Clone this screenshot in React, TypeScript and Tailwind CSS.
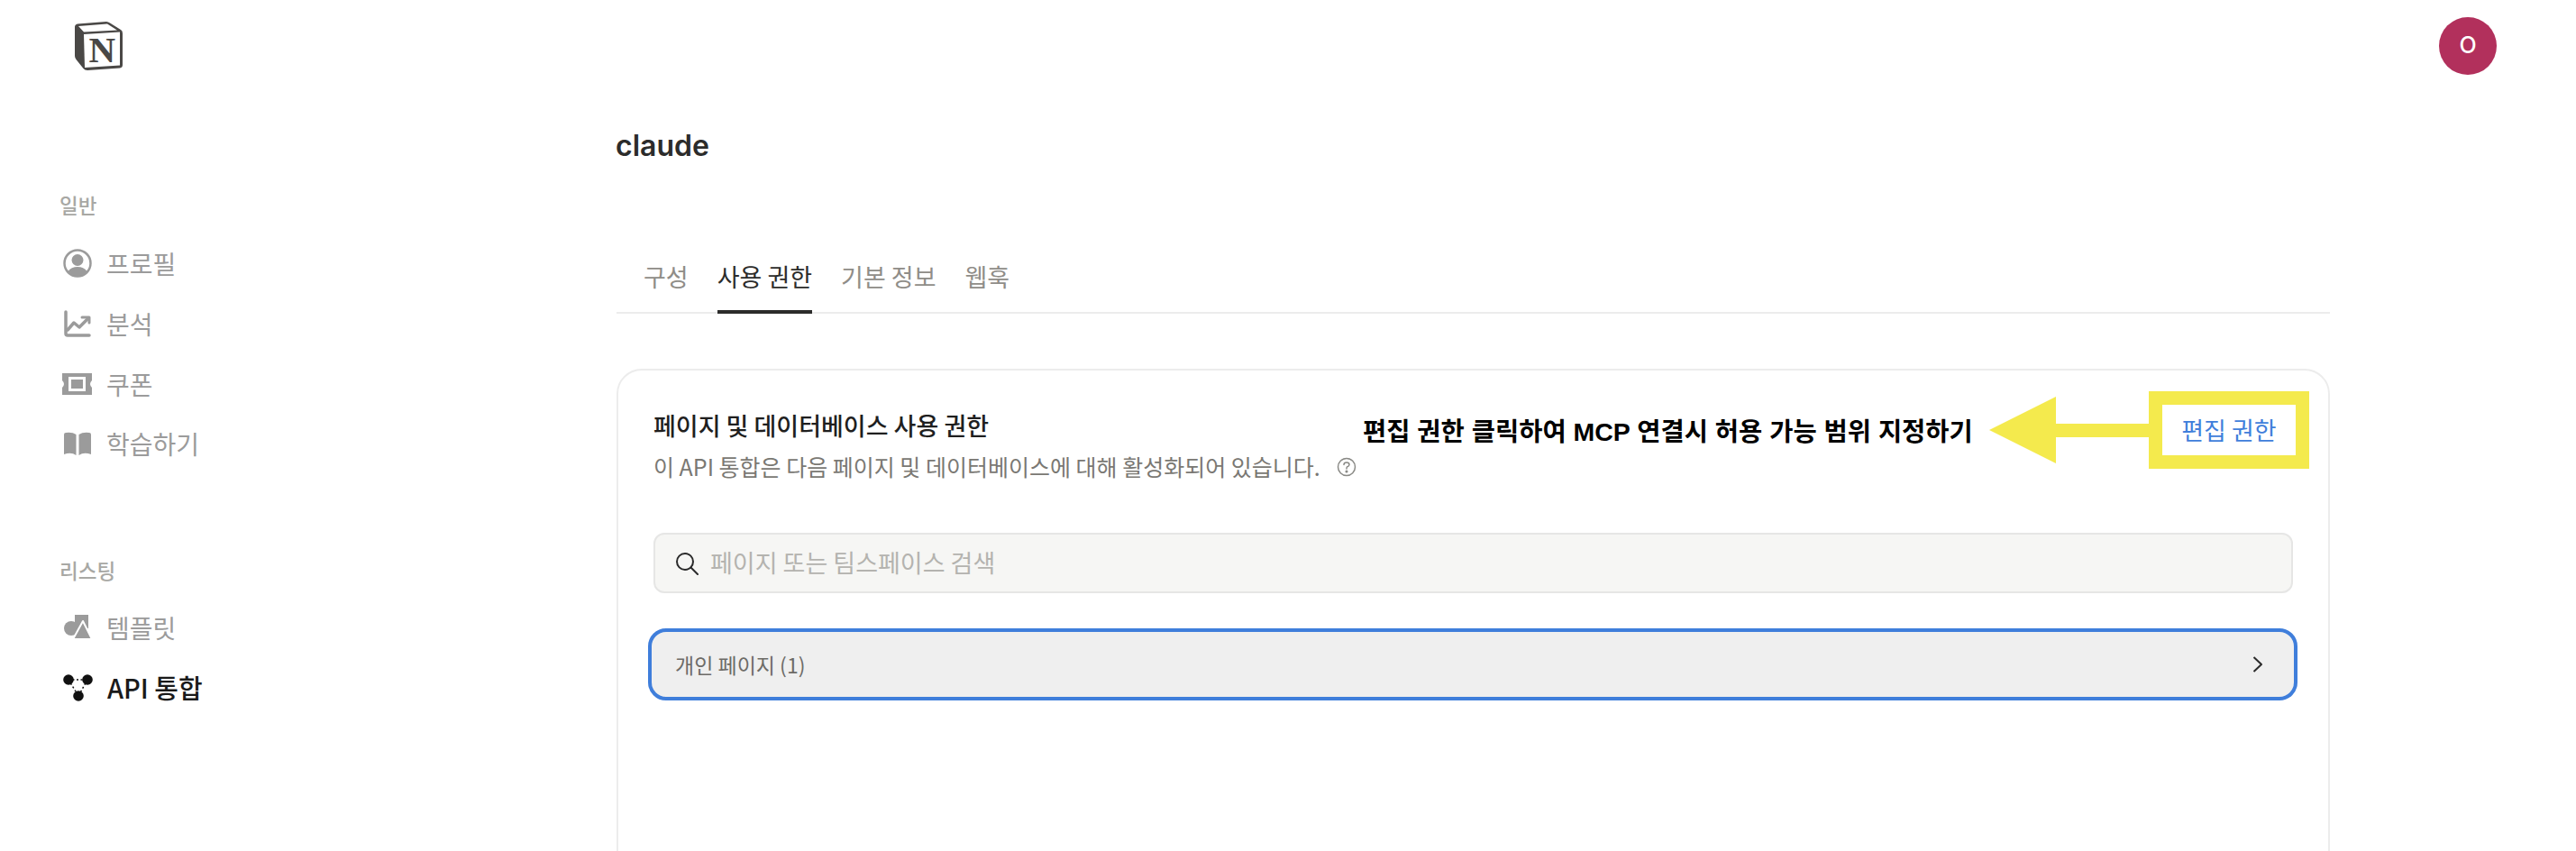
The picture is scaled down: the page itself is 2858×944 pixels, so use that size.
const kr = '"Noto Sans CJK KR", Inter, sans-serif'

const NotionLogo = () => (
  <svg width="54" height="56" viewBox="0 0 54 56">
    <path d="M1 7 Q1 4 4 3.500 L36 1 Q38 1 40 2.500 L52 10 Q54 11 54 14 L54 49 Q54 52 51 52.500 L15 55 Q12 55 10.500 53 L2.500 43 Q1 41 1 39 Z" fill="#4a4846" />
    <path d="M5 6 L37 3.500 L48 10.500 L11 12.500 Z" fill="#fff" />
    <path d="M11 15 L51 12.500 L51 49.500 L12 52 Z" fill="#fff" />
    <text x="16.500" y="46" fontFamily="Liberation Serif, serif" fontWeight="700" fontSize="41" fill="#4a4846">N</text>
  </svg>
)

const ProfileIcon = () => (
  <svg width="32" height="32" viewBox="0 0 32 32" fill="none">
    <circle cx="16" cy="16" r="14.500" stroke="#9b9b9b" strokeWidth="2.500" />
    <circle cx="16" cy="12.500" r="6.500" fill="#9b9b9b" />
    <path d="M5.500 25 Q9 20 16 20 Q23 20 26.500 25 Q22 30 16 30 Q10 30 5.500 25 Z" fill="#9b9b9b" />
  </svg>
)

const ChartIcon = () => (
  <svg width="30" height="30" viewBox="0 0 30 30" fill="none" stroke="#9b9b9b" strokeWidth="3.500" strokeLinecap="round" strokeLinejoin="round">
    <path d="M2 2 V26 Q2 28 4 28 H28" />
    <path d="M4 22 L11 14 L17 19 L27 9" />
    <path d="M20 8 H28 V14" strokeWidth="3" />
  </svg>
)

const TicketIcon = () => (
  <svg width="34" height="24" viewBox="0 0 34 24">
    <path fillRule="evenodd" fill="#9b9b9b" d="M0 0 H33 V8 Q29 12 33 16 V24 H0 V16 Q4 12 0 8 Z M7 4 V20 H26 V4 Z" />
    <rect x="10" y="7" width="13" height="10" fill="#9b9b9b" />
  </svg>
)

const BookIcon = () => (
  <svg width="32" height="26" viewBox="0 0 32 26">
    <path fill="#9b9b9b" d="M14.500 3 V26 Q9 22 1 25 V3 Q1 1 3 1 Q10 0 14.500 3 Z" />
    <path fill="#9b9b9b" d="M17.500 3 V26 Q23 22 31 25 V3 Q31 1 29 1 Q22 0 17.500 3 Z" />
  </svg>
)

const TemplateIcon = () => (
  <svg width="31" height="28" viewBox="0 0 31 28">
    <circle cx="8" cy="15" r="8" fill="#9b9b9b" />
    <path fill="#9b9b9b" d="M12 0 H27 V15 H12 Z" />
    <path fill="#9b9b9b" stroke="#fff" strokeWidth="2" strokeLinejoin="round" d="M21 7 L31 27 H10 Z" />
  </svg>
)

const ApiIcon = () => (
  <svg width="33" height="30" viewBox="0 0 33 30" fill="none">
    <path d="M6 6 H27 M6 6 L17 24 M27 6 L17 24" stroke="#111" strokeWidth="1.500" strokeDasharray="2 2.500" />
    <circle cx="6" cy="6" r="5.800" fill="#111" />
    <circle cx="27" cy="6" r="5.800" fill="#111" />
    <circle cx="17" cy="24" r="5.800" fill="#111" />
  </svg>
)

const NavItem = ({ icon, label, active }: { icon: React.ReactNode; label: string; active?: boolean }) => (
  <div className="flex h-[66.7px] items-center">
    <div className="flex w-[52px] shrink-0 items-center justify-center pr-[12px]">{icon}</div>
    <span className={active ? 'ml-[1px] text-[29px] font-medium text-[#1a1a1a]' : 'text-[28px] text-[#9b9b9b]'}>{label}</span>
  </div>
)

const tabs = ['구성', '사용 권한', '기본 정보', '웹훅']

const App = () => {
  return (
    <div className="relative h-[944px] w-[2858px] overflow-hidden bg-white" style={{ fontFamily: kr }}>
      <div className="flex h-[142px] items-start justify-between pl-[82px] pr-[88px]">
        <div className="pt-[23px]">
          <NotionLogo />
        </div>
        <div className="mt-[19px] flex h-[64px] w-[64px] items-center justify-center rounded-full bg-[#b2305c] text-[25px] font-medium text-white" style={{ fontFamily: 'Inter, sans-serif' }}>
          O
        </div>
      </div>

      <div className="flex">
        <aside className="w-[684px] shrink-0 pl-[66px]">
          <div className="-mt-[2px] mb-[15px] box-content flex h-[34px] items-center pt-[70px] text-[22.5px] font-medium leading-none text-[#a8a8a4]">일반</div>
          <NavItem icon={<ProfileIcon />} label="프로필" />
          <NavItem icon={<ChartIcon />} label="분석" />
          <NavItem icon={<TicketIcon />} label="쿠폰" />
          <NavItem icon={<BookIcon />} label="학습하기" />
          <div className="mb-[14px] mt-[89px] flex h-[34px] items-center text-[22.5px] font-medium leading-none text-[#a8a8a4]">리스팅</div>
          <NavItem icon={<TemplateIcon />} label="템플릿" />
          <NavItem icon={<ApiIcon />} label="API 통합" active />
        </aside>

        <main className="w-[1901px] shrink-0">
          <h1 className="-ml-[1px] h-[40px] text-[32px] font-semibold leading-[40px] text-[#2c2c2b]" style={{ fontFamily: 'Inter, sans-serif' }}>claude</h1>
          <div className="mt-[107px] flex h-[59px] gap-[32px] border-b-2 border-[#ececec] pl-[30px]">
            {tabs.map((t, i) => (
              <div key={t} className={i === 1 ? 'h-[59px] border-b-4 border-[#2c2c2b] text-[27px] leading-[36px] text-[#2c2c2b]' : 'text-[27px] leading-[36px] text-[#8f8d88]'}>
                {t}
              </div>
            ))}
          </div>

          <section className="mt-[61px] h-[700px] rounded-[28px] border-2 border-[#ececec] px-[39px] pt-[38px]">
            <div className="h-[46px] text-[27px] font-medium leading-[46px] text-[#1f1f1f]">페이지 및 데이터베이스 사용 권한</div>
            <div className="flex h-[46px] items-center gap-[18px] text-[25px] text-[#7a7873]">
              <span>이 API 통합은 다음 페이지 및 데이터베이스에 대해 활성화되어 있습니다.</span>
              <svg width="22" height="22" viewBox="0 0 22 22" fill="none" stroke="#8a8a86" strokeWidth="1.500">
                <circle cx="11" cy="11" r="9.500" />
                <path d="M8 8.500 Q8 6 11 6 Q14 6 14 8.500 Q14 10 11.500 11 Q11 11.500 11 13" strokeLinecap="round" />
                <circle cx="11" cy="16" r="0.800" fill="#8a8a86" />
              </svg>
            </div>
            <div className="mt-[50px] flex h-[67px] w-[1819px] items-center gap-[13px] rounded-[12px] border-2 border-[#e6e6e5] bg-[#f6f6f4] pl-[22px] text-[27px] text-[#b4b3af]">
              <svg width="26" height="26" viewBox="0 0 26 26" fill="none" stroke="#2a2a2a" strokeWidth="2">
                <circle cx="11" cy="11" r="9" />
                <path d="M17.500 17.500 L25 25" strokeLinecap="round" />
              </svg>
              <span>페이지 또는 팀스페이스 검색</span>
            </div>
            <div className="-ml-[6px] mt-[39px] flex h-[80px] w-[1830px] items-center justify-between rounded-[20px] border-4 border-[#3f7edb] bg-[#efefef] pl-[26px] pr-[34px] text-[23px] text-[#6d6b67]">
              <span>개인 페이지 (1)</span>
              <svg width="12" height="20" viewBox="0 0 12 20" fill="none" stroke="#2a2a2a" strokeWidth="2">
                <path d="M1.500 2 L10 10 L1.500 18" strokeLinejoin="round" />
              </svg>
            </div>
          </section>
        </main>
      </div>

      {/* annotation over the card */}
      <div className="absolute left-[1512px] top-[455px] flex h-[48px] items-center whitespace-nowrap text-[28.5px] font-bold leading-none text-black" style={{ fontFamily: '"Liberation Sans", "Noto Sans CJK KR", sans-serif' }}>
        편집 권한 클릭하여 MCP 연결시 허용 가능 범위 지정하기
      </div>
      <svg className="absolute left-[2207px] top-[440px]" width="178" height="74" viewBox="0 0 178 74">
        <path d="M0 37 L74 0 V30 H178 V45 H74 V74 Z" fill="#f4ea4d" />
      </svg>
      <div className="absolute left-[2384px] top-[434px] flex h-[86px] w-[178px] items-center justify-center border-[15px] border-[#f4ea4d] bg-white text-[27px] text-[#3f7edb]">
        편집 권한
      </div>
    </div>
  )
}

export default App
